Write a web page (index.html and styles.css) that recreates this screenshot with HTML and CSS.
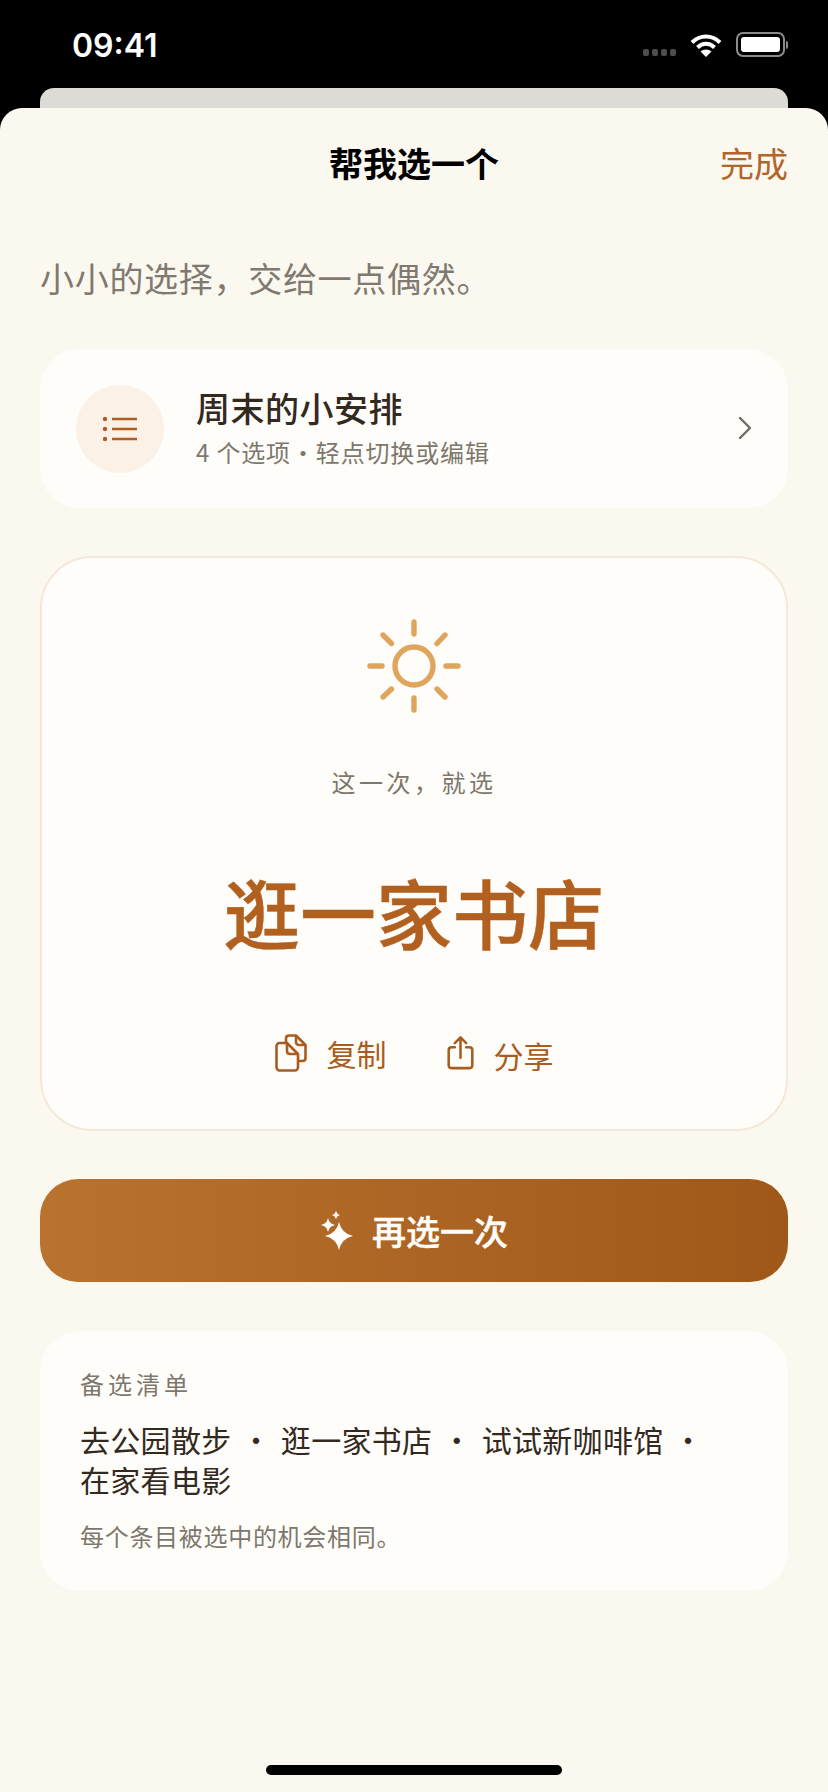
FILE: index.html
```html
<!DOCTYPE html>
<html lang="zh-CN">
<head>
    <meta charset="UTF-8">
    <meta name="viewport" content="width=device-width, initial-scale=1.0">
    <title>帮我选一个</title>
    <link rel="stylesheet" href="styles.css">
</head>
<body>
    <div class="status">
        <span class="time">09:41</span>
        <div class="status-icons">
            <div class="signal"><i></i><i></i><i></i><i></i></div>
            <svg width="32" height="24" viewBox="0 0 32 24" fill="none" stroke="#fff" stroke-width="4">
                <path d="M2 9.500C10 1.500 22 1.500 30 9.500"/>
                <path d="M7.500 14.500C12.500 9.500 19.500 9.500 24.500 14.500"/>
                <path d="M16 24L10.500 18.500C13.500 15.800 18.500 15.800 21.500 18.500Z" fill="#fff" stroke="none"/>
            </svg>
            <div class="battery"><div class="battery-level"></div></div>
            <div class="battery-tip"></div>
        </div>
    </div>
    <div class="back-sheet"></div>
    <div class="sheet">
        <div class="nav">
            <h1 class="nav-title">帮我选一个</h1>
            <a class="nav-done">完成</a>
        </div>
        <p class="tagline">小小的选择，交给一点偶然。</p>

        <div class="list-row">
            <div class="list-icon">
                <svg width="36" height="28" viewBox="0 0 36 28" fill="none" stroke="#ad5f22" stroke-width="2.600">
                    <circle cx="3" cy="4" r="2.200" fill="#ad5f22" stroke="none"/>
                    <circle cx="3" cy="14" r="2.200" fill="#ad5f22" stroke="none"/>
                    <circle cx="3" cy="24" r="2.200" fill="#ad5f22" stroke="none"/>
                    <path d="M10 4H35M10 14H35M10 24H35"/>
                </svg>
            </div>
            <div class="list-text">
                <div class="list-name">周末的小安排</div>
                <div class="list-sub">4 个选项·轻点切换或编辑</div>
            </div>
            <svg class="chevron" width="14" height="24" viewBox="0 0 14 24" fill="none" stroke="#6f6a62" stroke-width="2.400" stroke-linecap="round" stroke-linejoin="round">
                <path d="M2 2L12 12L2 22"/>
            </svg>
        </div>

        <div class="result">
            <svg class="sun" width="94" height="94" viewBox="0 0 94 94" fill="none" stroke="#dfa55c" stroke-width="5.400" stroke-linecap="round">
                <circle cx="47" cy="47" r="19"/>
                <path d="M47 3V15M47 79V91M3 47H15M79 47H91M16 16L24.500 24.500M70 70L78 78M78 16L70 24.500M24.500 70L16 78"/>
            </svg>
            <div class="result-label">这一次，就选</div>
            <div class="result-value">逛一家书店</div>
            <div class="actions">
                <a class="action">
                    <svg width="32" height="38" viewBox="0 0 32 38" fill="none" stroke="#a85c20" stroke-width="2.600" stroke-linejoin="round">
                        <path d="M11 9V4.500C11 2.800 12.300 1.500 14 1.500H21L30.500 11V24C30.500 25.700 29.200 27 27.500 27H23.500"/>
                        <path d="M21 1.500V8C21 9.700 22.300 11 24 11H30.500"/>
                        <path d="M4.500 9H12L23 20V33C23 34.900 21.700 36.500 20 36.500H4.500C2.800 36.500 1.500 34.900 1.500 33V12.500C1.500 10.500 2.800 9 4.500 9Z"/>
                        <path d="M12 9V17C12 18.700 13.300 20 15 20H23"/>
                    </svg>
                    <span>复制</span>
                </a>
                <a class="action action-share">
                    <svg width="27" height="34" viewBox="0 0 28 36" fill="none" stroke="#a85c20" stroke-width="2.700" stroke-linecap="round" stroke-linejoin="round">
                        <path d="M8 12H4.500C2.800 12 1.500 13.300 1.500 15V31C1.500 32.700 2.800 34 4.500 34H23.500C25.200 34 26.500 32.700 26.500 31V15C26.500 13.300 25.200 12 23.500 12H20"/>
                        <path d="M14 23V2M8 7.500L14 1.500L20 7.500"/>
                    </svg>
                    <span>分享</span>
                </a>
            </div>
        </div>

        <button class="again">
            <svg width="34" height="40" viewBox="0 0 34 40" fill="#fffdf9">
                <path d="M19 11Q21.500 22.500 33 25Q21.500 27.500 19 39Q16.500 27.500 5 25Q16.500 22.500 19 11Z"/>
                <path d="M8 7Q9.200 12.800 15 14Q9.200 15.200 8 21Q6.800 15.200 1 14Q6.800 12.800 8 7Z"/>
                <path d="M16 0Q16.800 3.200 20 4Q16.800 4.800 16 8Q15.200 4.800 12 4Q15.200 3.200 16 0Z"/>
            </svg>
            再选一次
        </button>

        <div class="options">
            <div class="options-title">备选清单</div>
            <div class="options-items">去公园散步 · 逛一家书店 · 试试新咖啡馆 · 在家看电影</div>
            <div class="options-note">每个条目被选中的机会相同。</div>
        </div>

        <div class="home-bar"></div>
    </div>
</body>
</html>
```

FILE: styles.css
```css
* {
    margin: 0;
    padding: 0;
    box-sizing: border-box;
}
html, body {
    height: 100%;
}
body {
    display: flex;
    flex-direction: column;
    background-color: #000;
    font-family: "Noto Sans CJK SC", "Liberation Sans", sans-serif;
    overflow: hidden;
}

/* status bar */
.status {
    height: 88px;
    flex: none;
    display: flex;
    justify-content: space-between;
    align-items: flex-start;
    padding: 25px 40px 0 72px;
    color: #fff;
}
.time {
    font-family: Inter, "Liberation Sans", sans-serif;
    font-size: 32px;
    font-weight: 600;
    line-height: 42px;
}
.status-icons {
    display: flex;
    align-items: center;
    padding-top: 7px;
}
.signal {
    display: flex;
    gap: 3px;
    margin: 16px 14px 0 0;
}
.signal i {
    width: 6px;
    height: 7px;
    border-radius: 2px;
    background-color: #4d4d4d;
}
.battery {
    width: 49px;
    height: 25px;
    margin-left: 14px;
    padding: 3px;
    border: 2px solid #8a8a8a;
    border-radius: 7px;
}
.battery-level {
    height: 100%;
    border-radius: 3px;
    background-color: #fff;
}
.battery-tip {
    width: 2px;
    height: 8px;
    margin-left: 1px;
    border-radius: 0 2px 2px 0;
    background-color: #8a8a8a;
}
.back-sheet {
    height: 20px;
    flex: none;
    margin: 0 40px;
    border-radius: 14px 14px 0 0;
    background-color: #dddbd5;
}

/* sheet */
.sheet {
    flex: 1;
    display: flex;
    flex-direction: column;
    padding: 0 40px;
    background-color: #fbf8f0;
    border-radius: 22px 22px 0 0;
}
.nav {
    display: flex;
    justify-content: center;
    position: relative;
    padding-top: 28px;
    height: 110px;
}
.nav-title {
    font-size: 34px;
    font-weight: 600;
    line-height: 54px;
    color: #000;
}
.nav-done {
    position: absolute;
    right: 0;
    top: 28px;
    font-size: 34px;
    line-height: 54px;
    color: #b1652a;
}
.tagline {
    height: 131px;
    padding-top: 35px;
    font-size: 34px;
    line-height: 50px;
    letter-spacing: 0.700px;
    color: #7f796f;
}

.list-row {
    height: 159px;
    flex: none;
    display: flex;
    align-items: center;
    padding: 0 36px;
    background-color: #fffdf9;
    border-radius: 40px;
}
.list-icon {
    width: 88px;
    height: 88px;
    display: flex;
    align-items: center;
    justify-content: center;
    border-radius: 50%;
    background-color: #fbf1e6;
}
.list-text {
    flex: 1;
    margin-left: 32px;
    padding-bottom: 4px;
}
.list-name {
    margin-bottom: 2px;
    font-size: 34px;
    font-weight: 500;
    line-height: 48px;
    letter-spacing: 0.500px;
    color: #33291f;
}
.list-sub {
    font-size: 24px;
    line-height: 36px;
    letter-spacing: 0.850px;
    color: #7d776d;
}
.chevron {
    margin-bottom: 2px;
}

.result {
    height: 575px;
    flex: none;
    margin-top: 48px;
    display: flex;
    flex-direction: column;
    align-items: center;
    padding-top: 61px;
    background-color: #fffdf9;
    border: 2px solid #f5e8d9;
    border-radius: 52px;
}
.result-label {
    margin-top: 51px;
    font-size: 24px;
    line-height: 36px;
    letter-spacing: 3.500px;
    color: #7d776d;
}
.result-value {
    margin-top: 56px;
    font-size: 76px;
    font-weight: 500;
    line-height: 110px;
    -webkit-text-stroke: 0.500px #b1601f;
    color: #b1601f;
}
.actions {
    display: flex;
    gap: 60px;
    margin-top: 62px;
}
.action {
    display: flex;
    align-items: center;
    gap: 20px;
    font-size: 30px;
    line-height: 44px;
    color: #a85c20;
}
.action-share span {
    margin-top: 5px;
}

.again {
    height: 103px;
    flex: none;
    margin-top: 48px;
    display: flex;
    align-items: center;
    justify-content: center;
    gap: 18px;
    border: none;
    border-radius: 38px;
    background: linear-gradient(90deg, #ba722f, #a0581a);
    font-family: inherit;
    font-size: 34px;
    font-weight: 500;
    -webkit-text-stroke: 0.400px #fffdf9;
    color: #fffdf9;
}

.options {
    height: 260px;
    flex: none;
    margin-top: 49px;
    padding: 35px 40px 0;
    background-color: #fffdf9;
    border-radius: 40px;
}
.options-title {
    font-size: 24px;
    line-height: 36px;
    letter-spacing: 4px;
    color: #7d776d;
}
.options-items {
    width: 650px;
    margin-top: 17px;
    font-size: 30px;
    line-height: 40px;
    letter-spacing: 0.300px;
    word-spacing: 2.500px;
    color: #33291f;
}
.options-note {
    margin-top: 19px;
    font-size: 24px;
    line-height: 36px;
    letter-spacing: 0.700px;
    color: #7d776d;
}

.home-bar {
    width: 296px;
    height: 10px;
    flex: none;
    margin: auto auto 17px;
    border-radius: 5px;
    background-color: #000;
}
```
